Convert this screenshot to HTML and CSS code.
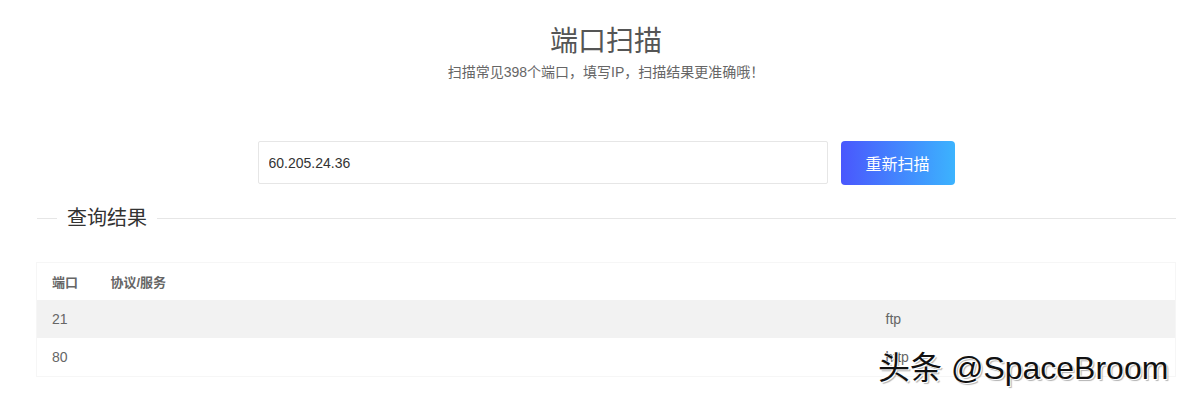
FILE: index.html
```html
<!DOCTYPE html>
<html lang="zh-CN">
<head>
  <meta charset="UTF-8">
  <title>端口扫描</title>
  <link rel="stylesheet" href="styles.css">
</head>
<body>
  <div class="page">

    <!-- 标题 -->
    <div class="header">
      <h1 class="title">端口扫描</h1>
      <p class="subtitle">扫描常见398个端口，填写IP，扫描结果更准确哦！</p>
    </div>

    <!-- 输入 -->
    <div class="search">
      <input class="ip-input" type="text" value="60.205.24.36">
      <button class="scan-button">重新扫描</button>
    </div>

    <!-- 查询结果 -->
    <div class="legend">
      <span class="legend-line short"></span>
      <span class="legend-text">查询结果</span>
      <span class="legend-line"></span>
    </div>

    <table class="result-table">
      <colgroup>
        <col class="col-port">
        <col class="col-proto">
        <col class="col-service">
      </colgroup>
      <thead>
        <tr>
          <th>端口</th>
          <th>协议/服务</th>
          <th></th>
        </tr>
      </thead>
      <tbody>
        <tr class="even">
          <td>21</td>
          <td></td>
          <td>ftp</td>
        </tr>
        <tr>
          <td>80</td>
          <td></td>
          <td>http</td>
        </tr>
      </tbody>
    </table>

    <!-- 水印 -->
    <div class="watermark">头条 @SpaceBroom</div>
  </div>
</body>
</html>
```

FILE: styles.css
```css
html, body {
  margin: 0;
  padding: 0;
  background: #fff;
  font-family: "Liberation Sans", "Noto Sans CJK SC", sans-serif;
  color: #666;
}

.page {
  position: relative;
  height: 399px;
  padding: 0 9px 0 36px;
  overflow: hidden;
}

/* 标题 */
.header {
  text-align: center;
  padding-top: 22px;
}

.title {
  margin: 0;
  font-size: 28px;
  line-height: 40px;
  font-weight: normal;
  color: #555;
}

.subtitle {
  margin: 0;
  font-size: 14px;
  line-height: 20px;
  color: #666;
}

/* 输入框 + 按钮 */
.search {
  display: flex;
  justify-content: center;
  gap: 13px;
  margin-top: 59px;
}

.ip-input {
  width: 570px;
  height: 43px;
  box-sizing: border-box;
  border: 1px solid #e6e6e6;
  border-radius: 2px;
  padding: 0 10px;
  font-family: "Liberation Sans", sans-serif;
  font-size: 14px;
  color: #333;
  outline: none;
}

.scan-button {
  width: 114px;
  height: 44px;
  border: 0;
  border-radius: 4px;
  background: linear-gradient(to right, #4a57fd, #3cb3fe);
  color: white;
  font-family: "Noto Sans CJK SC", sans-serif;
  font-size: 16px;
  cursor: pointer;
}

/* 查询结果 */
.legend {
  display: flex;
  align-items: center;
  gap: 10px;
  margin-top: 19px;
  padding-left: 1px;
}

.legend-line {
  flex: 1;
  height: 1px;
  background: #e6e6e6;
}

.legend-line.short {
  flex: 0 0 20px;
}

.legend-text {
  font-size: 20px;
  line-height: 28px;
  color: #333;
}

/* 表格 */
.result-table {
  width: 100%;
  margin-top: 30px;
  border-collapse: collapse;
  table-layout: fixed;
  border: 1px solid #f6f6f6;
  font-size: 14px;
}

.col-port { width: 59px; }
.col-service { width: 305px; }

.result-table th,
.result-table td {
  padding: 0 15px;
  text-align: left;
  color: #666;
  white-space: nowrap;
}

.result-table th {
  height: 37px;
  font-weight: bold;
  font-size: 13px;
}

.result-table td {
  height: 38px;
}

.result-table tr.even {
  background: #f2f2f2;
}

/* 水印 */
.watermark {
  position: absolute;
  left: 878px;
  top: 348px;
  font-size: 32px;
  line-height: 40px;
  color: #111;
  white-space: nowrap;
  text-shadow: 1px 1px 0 #fff, -1px -1px 0 #fff, 2px 2px 1px rgba(0,0,0,0.3);
}
```
